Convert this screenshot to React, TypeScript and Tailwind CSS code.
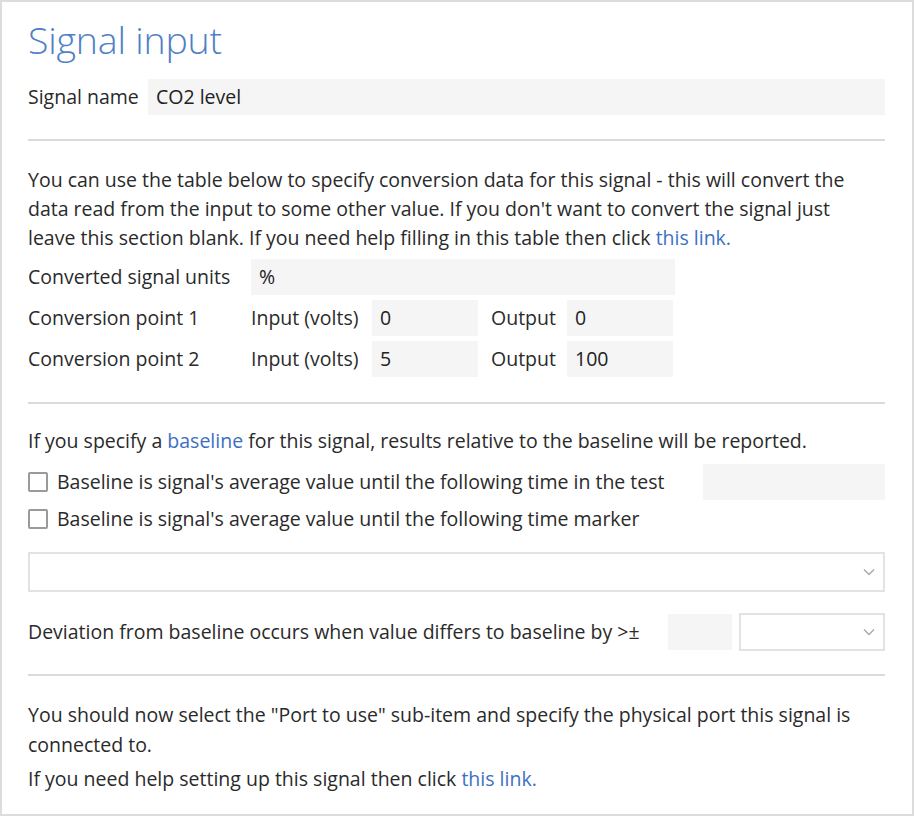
import React from 'react';

function Field({ value = '', className = '' }: { value?: string; className?: string }) {
    return (
        <div className={`h-9 bg-[#f5f5f5] flex items-center px-2 text-[#222] ${className}`}>
            {value}
        </div>
    );
}

function Chevron() {
    return (
        <svg width="12" height="8" viewBox="0 0 12 8" fill="none">
            <path d="M1 1.5l5 5 5-5" stroke="#a8a8a8" strokeWidth="1.4" />
        </svg>
    );
}

function Select({ className = '' }: { className?: string }) {
    return (
        <div className={`border-2 border-[#e3e3e3] bg-white flex items-center justify-end pr-2 ${className}`}>
            <Chevron />
        </div>
    );
}

function Check({ label }: { label: string }) {
    return (
        <label className="flex items-center gap-[9px]">
            <span className="w-[20px] h-[20px] border-2 border-[#9a9a9a] rounded-[2px] bg-white shrink-0" />
            <span>{label}</span>
        </label>
    );
}

function Divider() {
    return <div className="h-[2px] bg-[#dadada]" />;
}

export default function App() {
    return (
        <div
            className="w-[914px] h-[816px] border-2 border-[#dcdcdc] bg-white pl-[26px] pr-[27px] text-[19.5px] text-[#2a2a2a]"
            style={{ fontFamily: '"Open Sans", "Noto Sans", sans-serif' }}
        >
            <h1 className="text-[37.5px] font-light text-[#4f7fc4] pt-[12px] leading-[52px] tracking-[-0.2px]">Signal input</h1>

            <div className="flex items-center gap-2 mt-[13px]">
                <span className="w-[112px] leading-none">Signal name</span>
                <Field value="CO2 level" className="flex-1" />
            </div>

            <div className="mt-[24px]">
                <Divider />
            </div>

            <p className="mt-[24px] leading-[29px] max-w-[830px]">
                You can use the table below to specify conversion data for this signal - this will convert the
                data read from the input to some other value. If you don't want to convert the signal just
                leave this section blank. If you need help filling in this table then click{' '}
                <a className="text-[#3b70c4]">this link.</a>
            </p>

            <div className="grid grid-cols-[223px_121px_106px_13px_76px_106px] gap-y-[5px] items-center mt-[7px]">
                <span>Converted signal units</span>
                <Field value="%" className="col-span-5 w-[424px]" />

                <span>Conversion point 1</span>
                <span>Input (volts)</span>
                <Field value="0" />
                <span />
                <span>Output</span>
                <Field value="0" />

                <span>Conversion point 2</span>
                <span>Input (volts)</span>
                <Field value="5" />
                <span />
                <span>Output</span>
                <Field value="100" />
            </div>

            <div className="mt-[25px]">
                <Divider />
            </div>

            <p className="mt-[22px] leading-[29px]">
                If you specify a <a className="text-[#3b70c4]">baseline</a> for this signal, results relative to the
                baseline will be reported.
            </p>

            <div className="flex items-center justify-between mt-[9px]">
                <Check label="Baseline is signal's average value until the following time in the test" />
                <Field className="w-[182px]" />
            </div>
            <div className="mt-[4px] leading-[29px]">
                <Check label="Baseline is signal's average value until the following time marker" />
            </div>

            <Select className="h-[40px] mt-[19px]" />

            <div className="flex items-center mt-[21px]">
                <span className="flex-1">Deviation from baseline occurs when value differs to baseline by &gt;±</span>
                <Field className="w-[64px]" />
                <Select className="w-[146px] h-[38px] ml-[7px]" />
            </div>

            <div className="mt-[23px]">
                <Divider />
            </div>

            <p className="mt-[24px] leading-[30px]">
                You should now select the "Port to use" sub-item and specify the physical port this signal is
                connected to.
            </p>
            <p className="mt-[4px] leading-[30px]">
                If you need help setting up this signal then click <a className="text-[#3b70c4]">this link.</a>
            </p>
        </div>
    );
}
